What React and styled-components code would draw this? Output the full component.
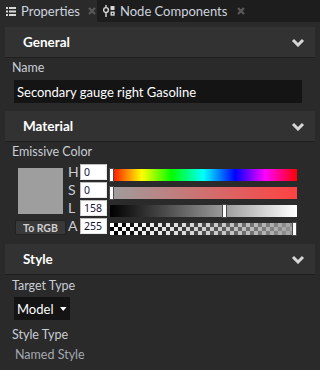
import styled, { createGlobalStyle } from 'styled-components';

const Global = createGlobalStyle`
  html, body {
    margin: 0;
    padding: 0;
    background: #2a2a2a;
  }
  body {
    width: 320px;
    height: 370px;
    overflow: hidden;
    font-family: Lato, "Noto Sans", sans-serif;
    font-size: 12px;
    color: #d6d6d6;
  }
`;

const Panel = styled.div`
  display: flex;
  flex-direction: column;
  width: 320px;
  height: 370px;
  background: #2a2a2a;
`;

const TabBar = styled.div`
  display: flex;
  align-items: stretch;
  height: 22px;
  flex-shrink: 0;
  background: #1d1d1d;
`;

const Tab = styled.div`
  display: flex;
  align-items: center;
  gap: 5px;
  width: ${(p) => p.$w}px;
  padding-left: 6px;
  box-sizing: border-box;
  background: ${(p) => (p.$active ? '#2a2a2a' : 'transparent')};
  color: #cdd3df;
  font-size: 13px;
  white-space: nowrap;
`;

const Close = styled.span`
  display: inline-flex;
  margin-left: ${(p) => p.$ml}px;
`;

const Body = styled.div`
  display: flex;
  flex-direction: column;
  padding: 0 5px;
`;

const Header = styled.div`
  display: flex;
  align-items: center;
  justify-content: space-between;
  height: 30px;
  flex-shrink: 0;
  margin-top: ${(p) => p.$mt}px;
  padding: 0 10px 0 18px;
  background: #323232;
  box-shadow: 0 1px 0 #1f1f1f;
  color: #ffffff;
  font-weight: 700;
  font-size: 13.5px;
`;

const Label = styled.div`
  height: 14px;
  line-height: 14px;
  margin-top: ${(p) => p.$mt}px;
  padding-left: 7px;
  color: #c9cdd6;
  font-size: 12.5px;
`;

const TextField = styled.div`
  display: flex;
  align-items: center;
  height: 23px;
  flex-shrink: 0;
  margin: 5px 13px 0 9px;
  padding: 0 3px;
  background: #141414;
  color: #ffffff;
  font-size: 13px;
`;

const ColorRow = styled.div`
  display: flex;
  margin-top: 5px;
  padding-left: 10px;
`;

const SwatchCol = styled.div`
  display: flex;
  flex-direction: column;
  width: 51px;
  padding-top: 4px;
`;

const Swatch = styled.div`
  width: 45px;
  height: 46px;
  margin-left: 3px;
  background: rgb(158, 158, 158);
`;

const SmallButton = styled.div`
  display: flex;
  align-items: center;
  justify-content: center;
  height: 13px;
  margin-top: 6px;
  background: #393939;
  border: 1px solid #222222;
  border-radius: 2px;
  color: #cfcfcf;
  font-size: 10.5px;
  font-weight: 700;
`;

const Channels = styled.div`
  display: flex;
  flex-direction: column;
  margin-left: 2px;
`;

const Channel = styled.div`
  display: flex;
  align-items: flex-start;
  height: 18px;
`;

const ChLetter = styled.span`
  width: 12px;
  line-height: 16px;
  color: #c9cdd6;
  font-size: 14px;
`;

const NumBox = styled.div`
  display: flex;
  align-items: center;
  width: 27px;
  height: 16px;
  box-sizing: border-box;
  padding-left: 3px;
  background: #ffffff;
  border: 1px solid #bdbdbd;
  border-right-color: #e8e8e8;
  border-bottom-color: #e8e8e8;
  color: #14143a;
  font-family: "Noto Sans", sans-serif;
  font-size: 10.5px;
`;

const Track = styled.div`
  position: relative;
  margin: 5px 0 0 3px;
  width: 187px;
  height: 12px;
  background: ${(p) => p.$bg};
`;

const Checker = styled(Track)`
  background-image: linear-gradient(to right, rgba(158, 158, 158, 0), rgba(158, 158, 158, 0.95)),
    repeating-conic-gradient(#000000 0 25%, #ffffff 0 50%);
  background-size: 100% 100%, 8px 8px;
`;

const Thumb = styled.div`
  position: absolute;
  top: -1px;
  width: 3px;
  height: 12px;
  background: #ffffff;
  border: 1px solid #4a4a4a;
`;

const Dropdown = styled.div`
  display: flex;
  align-items: center;
  gap: 7px;
  width: 56px;
  height: 23px;
  flex-shrink: 0;
  box-sizing: border-box;
  margin: 4px 0 0 9px;
  padding: 0 3px;
  background: #141414;
  color: #ffffff;
  font-size: 13px;
`;

const Value = styled.div`
  height: 14px;
  line-height: 14px;
  margin: 6px 0 0 10px;
  color: #a4a8b1;
  font-size: 12.5px;
`;

const Chevron = () => (
  <svg width="14" height="9" viewBox="0 0 14 9">
    <path d="M2 2 L7 7 L12 2" fill="none" stroke="#d6d6d6" strokeWidth="3" strokeLinejoin="miter" />
  </svg>
);

const CloseIcon = () => (
  <svg width="8" height="8" viewBox="0 0 8 8">
    <path d="M1 1 L7 7 M7 1 L1 7" stroke="#585858" strokeWidth="2.4" />
  </svg>
);

const ListIcon = () => (
  <svg width="10" height="9" viewBox="0 0 10 9">
    <rect x="0" y="0" width="2" height="2" fill="#d8d8d8" />
    <rect x="3" y="0" width="7" height="2" fill="#d8d8d8" />
    <rect x="0" y="3.5" width="2" height="2" fill="#d8d8d8" />
    <rect x="3" y="3.5" width="7" height="2" fill="#d8d8d8" />
    <rect x="0" y="7" width="2" height="2" fill="#d8d8d8" />
    <rect x="3" y="7" width="7" height="2" fill="#d8d8d8" />
  </svg>
);

const NodeIcon = () => (
  <svg width="12" height="12" viewBox="0 0 12 12">
    <line x1="3" y1="0" x2="3" y2="12" stroke="#d8d8d8" strokeWidth="1.4" />
    <circle cx="3" cy="5" r="2.4" fill="#1d1d1d" stroke="#d8d8d8" strokeWidth="1.4" />
    <rect x="7.5" y="1" width="4" height="4" fill="#d8d8d8" />
    <rect x="8.2" y="7.2" width="2.8" height="2.8" fill="none" stroke="#d8d8d8" strokeWidth="1.4" />
  </svg>
);

const hue =
  'linear-gradient(to right, #ff0000, #ffff00 17%, #00ff00 33%, #00ffff 50%, #0000ff 67%, #ff00ff 83%, #ff0000)';
const sat = 'linear-gradient(to right, #9e9e9e, #ff4242)';
const light = 'linear-gradient(to right, #000000, #ffffff)';

const channels = [
  { k: 'H', v: '0', bg: hue, left: -1 },
  { k: 'S', v: '0', bg: sat, left: -1 },
  { k: 'L', v: '158', bg: light, left: 112 },
  { k: 'A', v: '255', left: 182 },
];

export default function App() {
  return (
    <Panel>
      <Global />
      <TabBar>
        <Tab $active $w={97}>
          <ListIcon />
          Properties
          <Close $ml={3}><CloseIcon /></Close>
        </Tab>
        <Tab $w={150}>
          <NodeIcon />
          Node Components
          <Close $ml={5}><CloseIcon /></Close>
        </Tab>
      </TabBar>
      <Body>
        <Header $mt={5}>
          General
          <Chevron />
        </Header>
        <Label $mt={4}>Name</Label>
        <TextField>Secondary gauge right Gasoline</TextField>
        <Header $mt={8}>
          Material
          <Chevron />
        </Header>
        <Label $mt={4}>Emissive Color</Label>
        <ColorRow>
          <SwatchCol>
            <Swatch />
            <SmallButton>To RGB</SmallButton>
          </SwatchCol>
          <Channels>
            {channels.map((c) => {
              const Bar = c.bg ? Track : Checker;
              return (
                <Channel key={c.k}>
                  <ChLetter>{c.k}</ChLetter>
                  <NumBox>{c.v}</NumBox>
                  <Bar $bg={c.bg}>
                    <Thumb style={{ left: `${c.left}px` }} />
                  </Bar>
                </Channel>
              );
            })}
          </Channels>
        </ColorRow>
        <Header $mt={8}>
          Style
          <Chevron />
        </Header>
        <Label $mt={5}>Target Type</Label>
        <Dropdown>
          Model
          <svg width="10" height="6" viewBox="0 0 10 6">
            <path d="M0 0 L10 0 L5 6 Z" fill="#ffffff" />
          </svg>
        </Dropdown>
        <Label $mt={8}>Style Type</Label>
        <Value>Named Style</Value>
      </Body>
    </Panel>
  );
}
